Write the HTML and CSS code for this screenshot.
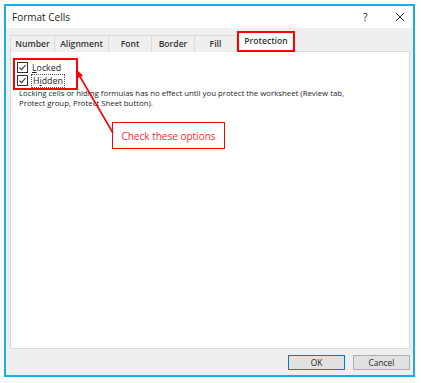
FILE: index.html
```html
<!DOCTYPE html>
<html lang="en">
<head>
    <meta charset="UTF-8">
    <meta name="viewport" content="width=device-width, initial-scale=1.0">
    <title>Format Cells</title>
    <link rel="stylesheet" href="styles.css">
</head>
<body>
    <div class="dialog">
        <div class="title-bar">
            <span class="title">Format Cells</span>
            <span class="title-help">?</span>
            <span class="title-close">
                <svg width="10" height="10" viewBox="0 0 10 10"><path d="M1 1 L9 9 M9 1 L1 9" stroke="#333" stroke-width="1"/></svg>
            </span>
        </div>
        <div class="dialog-body">
            <div class="tabs">
                <div class="tab tab-number">Number</div>
                <div class="tab tab-alignment">Alignment</div>
                <div class="tab tab-font">Font</div>
                <div class="tab tab-border">Border</div>
                <div class="tab tab-fill">Fill</div>
                <div class="tab tab-active">Protection</div>
            </div>
            <div class="pane">
                <div class="options">
                    <label class="option">
                        <span class="checkbox">
                            <svg width="9" height="9" viewBox="0 0 9 9"><path d="M1.5 4.6 L3.6 6.7 L7.6 2" fill="none" stroke="#333" stroke-width="1.1"/></svg>
                        </span>
                        <span><u>L</u>ocked</span>
                    </label>
                    <label class="option">
                        <span class="checkbox">
                            <svg width="9" height="9" viewBox="0 0 9 9"><path d="M1.5 4.6 L3.6 6.7 L7.6 2" fill="none" stroke="#333" stroke-width="1.1"/></svg>
                        </span>
                        <span class="focused">H<u>i</u>dden</span>
                    </label>
                </div>
                <p class="note">Locking cells or hiding formulas has no effect until you protect the worksheet (Review tab, Protect group, Protect Sheet button).</p>
            </div>
            <div class="buttons">
                <button class="btn btn-default">OK</button>
                <button class="btn">Cancel</button>
            </div>
        </div>
    </div>

    <div class="callout">Check these options</div>
    <svg class="arrow" width="421" height="383" viewBox="0 0 421 383">
        <line x1="113" y1="133" x2="79" y2="75" stroke="#ff0000" stroke-width="1.6"/>
        <path d="M76 69 L76.5 79 L83 75.5 Z" fill="#ff0000"/>
    </svg>
</body>
</html>
```

FILE: styles.css
```css
body {
    margin: 0;
    background: #ffffff;
    font-family: "Open Sans", "Noto Sans", sans-serif;
    color: #1e1e1e;
    position: relative;
    width: 421px;
    height: 383px;
    overflow: hidden;
}
.dialog {
    position: relative;
    margin: 4px;
    width: 411px;
    height: 373px;
    border: 2px solid #16aee9;
    box-sizing: border-box;
    display: flex;
    flex-direction: column;
}
.title-bar {
    height: 22px;
    background: #ffffff;
    display: flex;
    align-items: center;
    padding: 0 0 0 6px;
    font-size: 10px;
}
.title {
    flex: 1;
}
.title-help {
    width: 32px;
    font-size: 10.5px;
}
.title-close {
    width: 18px;
    display: flex;
}
.dialog-body {
    flex: 1;
    background: #efefef;
    padding: 3px 3px 0 4px;
    display: flex;
    flex-direction: column;
}
.tabs {
    display: flex;
    align-items: flex-end;
    height: 21px;
    margin-bottom: -1px;
    position: relative;
    z-index: 1;
}
.tab {
    height: 17px;
    box-sizing: border-box;
    border: 1px solid #dcdcdc;
    border-bottom: none;
    margin-right: -1px;
    font-size: 8.6px;
    font-weight: 600;
    color: #333;
    display: flex;
    align-items: center;
    justify-content: center;
    background: #efefef;
}
.tab-number { width: 45px; }
.tab-alignment { width: 55px; }
.tab-font { width: 44px; }
.tab-border { width: 44px; }
.tab-fill { width: 43px; }
.tab-active {
    width: 58px;
    height: 21px;
    background: #ffffff;
    border: 2px solid #ff0000;
    margin-left: 1px;
    padding-bottom: 1px;
}
.pane {
    height: 298px;
    background: #ffffff;
    border: 1px solid #d9d9d9;
    box-sizing: border-box;
    padding: 6px 6px 0 2px;
}
.options {
    width: 59px;
    height: 26px;
    border: 2px solid #ff0000;
    display: flex;
    flex-direction: column;
    justify-content: space-around;
    padding: 1px 0 1px 2px;
}
.option {
    display: flex;
    align-items: center;
    gap: 4px;
    font-size: 8.8px;
    height: 13px;
}
.checkbox {
    width: 9px;
    height: 9px;
    border: 1px solid #333;
    display: flex;
    background: #fff;
}
.focused {
    outline: 1px dotted #555;
    outline-offset: 0;
    padding: 0 1px;
}
.note {
    width: 335px;
    margin: -1px 0 0 6px;
    font-size: 7.8px;
    line-height: 9.5px;
    color: #1e1e1e;
}
.buttons {
    flex: 1;
    display: flex;
    justify-content: flex-end;
    align-items: center;
    gap: 8px;
}
.btn {
    width: 57px;
    height: 15px;
    padding: 0;
    font-family: inherit;
    font-size: 8.4px;
    color: #1e1e1e;
    background: #e1e1e1;
    border: 1px solid #adadad;
}
.btn-default {
    border: 1.5px solid #0078d7;
}
.callout {
    position: absolute;
    left: 112px;
    top: 122px;
    width: 113px;
    height: 27px;
    box-sizing: border-box;
    border: 1.5px solid #ff0000;
    background: #ffffff;
    color: #ff2a2a;
    font-size: 10px;
    display: flex;
    align-items: center;
    justify-content: center;
}
.arrow {
    position: absolute;
    left: 0;
    top: 0;
    pointer-events: none;
}
```
